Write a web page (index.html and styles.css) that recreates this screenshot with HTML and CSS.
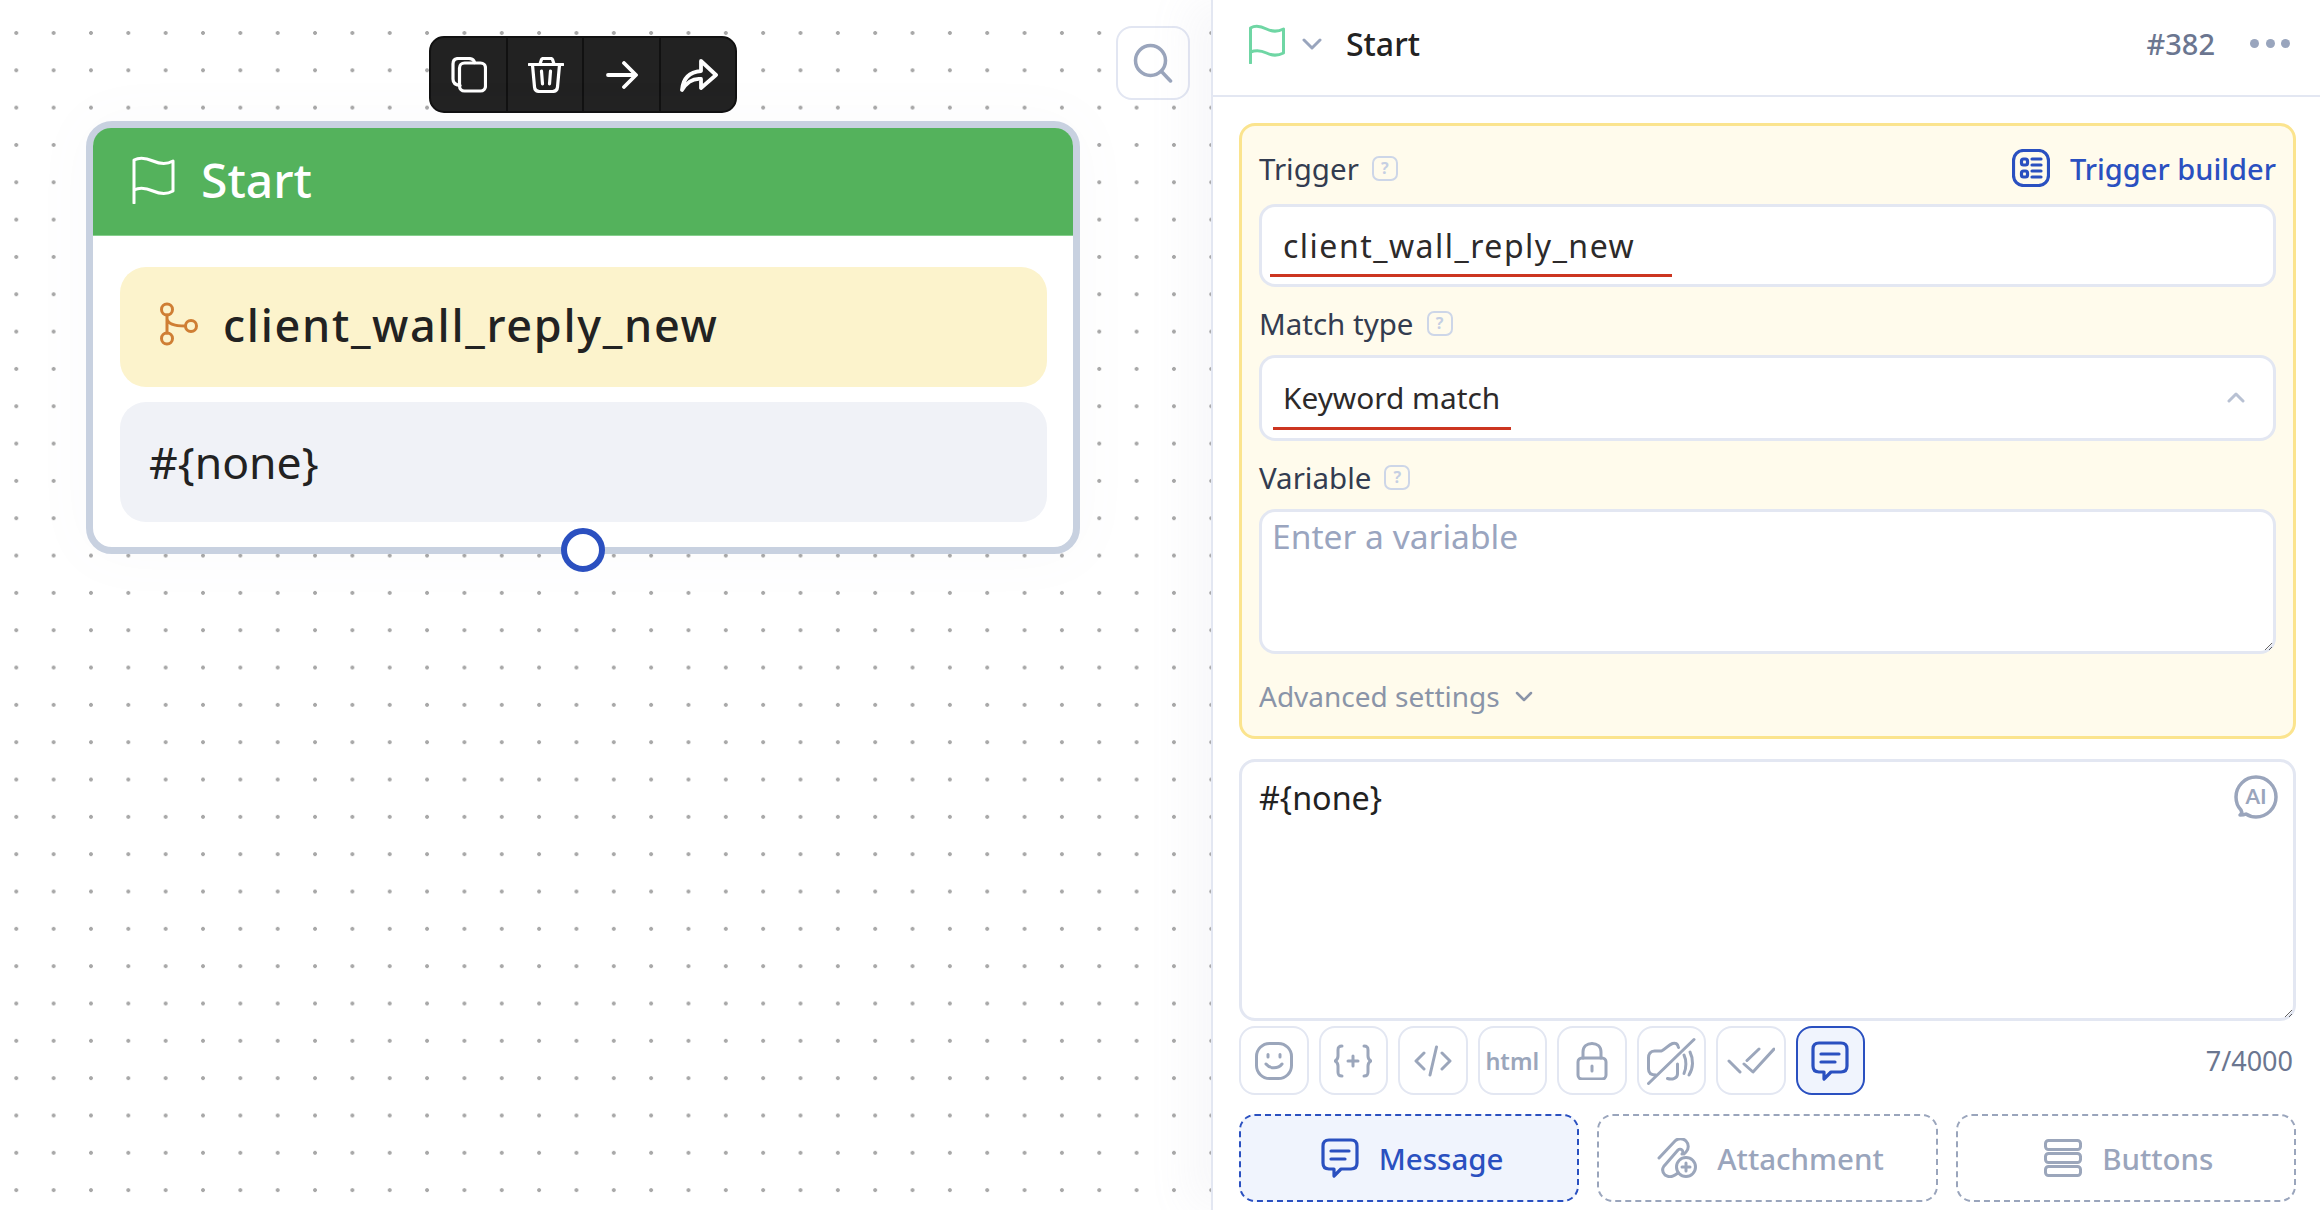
FILE: index.html
```html
<!DOCTYPE html>
<html lang="en">
<head>
<meta charset="utf-8">
<title>Start</title>
<link rel="stylesheet" href="styles.css">
</head>
<body>
<div class="app">
  <main class="canvas">
    <div class="node-tools">
      <button class="node-tool"><svg width="36" height="36" viewBox="0 0 36 36" class="ic-w"><path d="M9 28.500C4.500 28 2 26 2 22V7c0-3.500 2-5.500 5.500-5.500h10c3.500 0 5.500 2 6 4"/><rect x="8.500" y="6" width="26" height="28" rx="5"/></svg></button>
      <button class="node-tool"><svg width="36" height="36" viewBox="0 0 36 36" class="ic-w"><path d="M1 7.500h34M12 7l1.500-4.500c.3-.8 1-1 1.800-1h7.400c.8 0 1.500.2 1.800 1L26 7M4.500 8l2 22c.3 3 2 4.500 5 4.500h13c3 0 4.700-1.500 5-4.500l2-22M13.500 14l1 13M22.500 14l-1 13"/></svg></button>
      <button class="node-tool"><svg width="32" height="28" viewBox="0 0 32 28" class="ic-w ic-thick"><path d="M2 14h27M18 2l12 12-12 12"/></svg></button>
      <button class="node-tool"><svg width="38" height="34" viewBox="0 0 38 34" class="ic-w ic-thick"><path d="M2 32C3 20 10 14 21 13V3l15 14-15 13V21C13 20 7 24 2 32z"/></svg></button>
    </div>
    <button class="search"><svg width="40" height="40" viewBox="0 0 40 40" class="ic-search"><circle cx="17.500" cy="17.500" r="15"/><path d="M28.500 28.500l9 9.500"/></svg></button>
    <section class="node">
      <header class="node-head">
        <svg width="44" height="48" viewBox="0 0 44 48" class="ic-flag-w"><path d="M3 47V4c6-3 12-2 19 1s13 4 20 0v30c-7 4-13 3-20 0s-13-4-19-1"/></svg>
        <span class="node-title">Start</span>
      </header>
      <div class="node-body">
        <div class="node-row node-row-trigger">
          <svg width="40" height="44" viewBox="0 0 40 44" class="ic-trigger"><circle cx="9" cy="7.500" r="5.500"/><circle cx="9" cy="36.500" r="5.500"/><circle cx="33" cy="24" r="5.500"/><path d="M9 13v18M9 17c1 5 8 7 18 7"/></svg>
          <span class="node-trigger-text">client_wall_reply_new</span>
        </div>
        <div class="node-row node-row-msg">#{none}</div>
      </div>
      <span class="connector"></span>
    </section>
  </main>
  <aside class="panel">
    <header class="panel-head">
      <svg width="38" height="40" viewBox="0 0 38 40" class="ic-flag-g"><path d="M2.500 39V4c5-3 10-2 16 1s11 3 17 0v24c-6 3-11 3-17 0s-11-3-16-1"/></svg>
      <svg width="20" height="12" viewBox="0 0 20 12" class="ic-chev"><path d="M2 2l8 8 8-8"/></svg>
      <h1 class="panel-title">Start</h1>
      <span class="panel-id">#382</span>
      <span class="panel-more"><i></i><i></i><i></i></span>
    </header>
    <div class="panel-body">
      <section class="card">
        <div class="label-row">
          <span class="label">Trigger</span>
          <span class="help">?</span>
          <a class="builder"><svg width="38" height="38" viewBox="0 0 38 38" class="ic-blue"><rect x="1.500" y="1.500" width="35" height="35" rx="10"/><rect x="9.500" y="10" width="6" height="6" rx="2"/><rect x="9.500" y="22" width="6" height="6" rx="2"/><path d="M20 10h9M20 16h9M20 22h9M20 28h9"/></svg><span>Trigger builder</span></a>
        </div>
        <div class="field field-input">client_wall_reply_new<span class="redline redline-trigger"></span></div>
        <div class="label-row label-row-next">
          <span class="label">Match type</span>
          <span class="help">?</span>
        </div>
        <div class="field field-select">Keyword match<span class="redline redline-match"></span>
          <svg width="18" height="11" viewBox="0 0 18 11" class="ic-chev-up"><path d="M2 9l7-7 7 7"/></svg>
        </div>
        <div class="label-row label-row-next">
          <span class="label">Variable</span>
          <span class="help">?</span>
        </div>
        <div class="field-area">Enter a variable</div>
        <div class="advanced"><span>Advanced settings</span><svg width="18" height="11" viewBox="0 0 18 11" class="ic-chev-adv"><path d="M2 2l7 7 7-7"/></svg></div>
      </section>
      <div class="message">
        #{none}
        <svg width="44" height="44" viewBox="0 0 44 44" class="ic-ai"><path d="M6 40c2-1 2-3 1-5C3 31 2 27 2 22 2 11 11 2 22 2s20 9 20 20-9 20-20 20c-4 0-7-1-10-3-2 1-4 1-6 1z"/><text x="22" y="29" class="ai-text">AI</text></svg>
      </div>
      <div class="tools">
        <button class="tool"><svg width="38" height="38" viewBox="0 0 38 38" class="ic-gray"><rect x="1.500" y="1.500" width="35" height="35" rx="13"/><path d="M11 22c4 5 12 5 16 0"/><path d="M13 12.500v2.500M25 12.500v2.500"/></svg></button>
        <button class="tool"><svg width="38" height="34" viewBox="0 0 38 34" class="ic-gray"><path d="M8 2C5 2 4 3 4 6v6c0 3-1 4-3 5 2 1 3 2 3 5v6c0 3 1 4 4 4M30 2c3 0 4 1 4 4v6c0 3 1 4 3 5-2 1-3 2-3 5v6c0 3-1 4-4 4M19 12v10M14 17h10"/></svg></button>
        <button class="tool"><svg width="38" height="32" viewBox="0 0 38 32" class="ic-gray"><path d="M10 8L2 16l8 8M28 8l8 8-8 8M22.500 2L16 30"/></svg></button>
        <button class="tool tool-html">html</button>
        <button class="tool"><svg width="32" height="38" viewBox="0 0 32 38" class="ic-gray"><rect x="2" y="16" width="28" height="21" rx="4"/><path d="M7 16V10c0-5.500 4-8.500 9-8.500s9 3 9 8.500v6M16 24v5"/></svg></button>
        <button class="tool"><svg width="50" height="48" viewBox="0 0 50 48" class="ic-gray"><path d="M2.500 46.500L48 2.500M10 38C5 38 2.500 36 2.500 32V21c0-4 2-7 6-7h7c4-2 7-6 11-7.500 3-1 5 0 6 4M31.500 27v10c0 4-5 6-10 4.500"/><path d="M38 18c2.500 5 2.500 13 0 18.500M44 15c3.500 7 3.500 16-1 23"/></svg></button>
        <button class="tool"><svg width="48" height="28" viewBox="0 0 48 28" class="ic-gray"><path d="M2 14l11 11M17 17l9 8L47 2M20 13.500L32 2"/></svg></button>
        <button class="tool tool-active"><svg width="38" height="40" viewBox="0 0 38 40" class="ic-blue"><use href="#chat"/></svg></button>
        <span class="counter">7/4000</span>
      </div>
      <div class="kinds">
        <button class="kind kind-active"><svg width="38" height="40" viewBox="0 0 38 40" class="ic-blue"><use href="#chat"/></svg><span>Message</span></button>
        <button class="kind"><svg width="40" height="40" viewBox="0 0 40 40" class="ic-gray"><path d="M2 20L18 3c3-3 8-3 11 0s3 8 0 11l-2 2M8 27L21 12c1-1 3-1 4 0s1 3 0 4"/><path d="M21 35l-3 2c-3 2-7 2-10 0-3-3-3-6-1-9"/><circle cx="29" cy="29" r="9.500"/><path d="M29 25v8M25 29h8"/></svg><span>Attachment</span></button>
        <button class="kind"><svg width="38" height="38" viewBox="0 0 38 38" class="ic-gray"><rect x="1.500" y="1.500" width="35" height="9" rx="3"/><rect x="1.500" y="14.500" width="35" height="9" rx="3"/><rect x="1.500" y="27.500" width="35" height="9" rx="3"/></svg><span>Buttons</span></button>
      </div>
    </div>
  </aside>
</div>
<svg class="defs" width="0" height="0"><defs><g id="chat"><path d="M8 2h22c4 0 6 2 6 6v17c0 4-2 6-6 6H20l-7 7v-7H8c-4 0-6-2-6-6V8c0-4 2-6 6-6z"/><path d="M10 13h18M10 21h14"/></g></defs></svg>
</body>
</html>
```
FILE: styles.css
```css
* { box-sizing: border-box; }
html, body { margin: 0; height: 100%; }
body { font-family: "Noto Sans", "Liberation Sans", sans-serif; color: #222; background: #fff; }
button { font: inherit; padding: 0; cursor: pointer; }
svg { display: block; flex: none; fill: none; stroke-linecap: round; stroke-linejoin: round; }
.defs { position: absolute; }

.app { display: flex; width: 2320px; height: 1210px; overflow: hidden; }

.canvas {
  position: relative;
  flex: 0 0 1211px;
  background-image: radial-gradient(circle, #a8a8a8 1.7px, transparent 2.2px);
  background-size: 37.35px 37.33px;
  background-position: -2.4px 14.300px;
}

.node-tools {
  position: absolute; left: 429px; top: 36px;
  display: flex; width: 308px; height: 77px;
  background: #222; border: 2px solid #111; border-radius: 15px; overflow: hidden;
}
.node-tool {
  flex: 1; display: flex; align-items: center; justify-content: center;
  background: none; border: 0; border-left: 2px solid #111;
  padding-left: 2px;
}
.node-tool:first-child { border-left: 0; }
.ic-w { stroke: #fff; stroke-width: 3.200; }
.ic-thick { stroke-width: 3.800; }

.search {
  position: absolute; left: 1116px; top: 26px;
  width: 74px; height: 74px;
  display: flex; align-items: center; justify-content: center;
  background: #fff; border: 2px solid #e2e6f2; border-radius: 16px;
}
.ic-search { stroke: #9aa5bc; stroke-width: 3.500; }

.node {
  position: absolute; left: 86px; top: 121px; width: 994px; height: 433px;
  background: #fff; border: 7px solid #c8d1e0; border-radius: 26px;
  box-shadow: 0 0 60px rgba(120, 130, 160, .04);
}
.node-head {
  display: flex; align-items: center; gap: 26px;
  height: 108px; padding: 0 0 4px 38px;
  background: #54b25c; border-radius: 18px 18px 0 0;
  border-bottom: 1px solid #86cf8d;
}
.ic-flag-w { stroke: #fff; stroke-width: 3; }
.node-title { font-size: 48px; font-weight: 500; color: #fff; }
.node-body { display: flex; flex-direction: column; gap: 15px; padding: 31px 26px 0 27px; }
.node-row {
  display: flex; align-items: center; height: 120px; border-radius: 26px;
  font-size: 44.500px; color: #222;
}
.node-row-trigger { background: #fcf3cc; padding: 0 0 6px 38px; gap: 25px; }
.node-row-msg { background: #f0f2f7; padding: 0 0 2px 29px; }
.node-trigger-text { font-size: 45px; font-weight: 500; letter-spacing: 1.700px; }
.ic-trigger { stroke: #cf7e34; stroke-width: 3; }
.connector {
  position: absolute; left: 468px; top: 400px;
  width: 44px; height: 44px; border-radius: 50%;
  background: #fff; border: 6px solid #2b50c0;
}

.panel {
  flex: 1; min-width: 0; display: flex; flex-direction: column;
  background: #fff; border-left: 2px solid #e3e7f2;
  box-shadow: -24px 0 40px rgba(150, 160, 190, .07);
  position: relative;
}
.panel-head {
  display: flex; align-items: center;
  height: 97px; padding: 0 30px 8px 35px; border-bottom: 2px solid #e3e7f2;
}
.ic-flag-g { stroke: #6fd6a4; stroke-width: 3; }
.ic-chev { stroke: #99a5bd; stroke-width: 3; margin-left: 16px; }
.panel-title { margin: 0 0 0 24px; font-size: 32px; font-weight: 500; color: #222; }
.panel-id { margin-left: auto; font-size: 29px; font-weight: 500; color: #6b7690; }
.panel-more { display: flex; gap: 6.500px; margin-left: 35px; }
.panel-more i { width: 9px; height: 9px; border-radius: 50%; background: #99a5bd; }

.panel-body { display: flex; flex-direction: column; padding: 26px 24px 0 26px; }

.card {
  display: flex; flex-direction: column;
  height: 616px; padding: 22px 17px 0;
  background: #fffbec; border: 3px solid #fbe48e; border-radius: 16px;
}
.label-row { display: flex; align-items: center; height: 40px; }
.label-row-next { margin-top: 16px; }
.label { font-size: 29.500px; color: #333c50; }
.help {
  display: flex; align-items: center; justify-content: center;
  width: 26px; height: 25px; margin-left: 13px;
  border: 2.500px solid #cdd6e8; border-radius: 7px;
  font-size: 16px; font-weight: 700; color: #c5cfe3;
}
.builder { display: flex; align-items: center; gap: 20px; margin-left: auto; color: #2a50c0; font-size: 29px; font-weight: 500; }
.ic-blue { stroke: #2a50c0; stroke-width: 3.200; }

.field {
  position: relative; display: flex; align-items: center;
  margin-top: 12px; padding-left: 21px;
  background: #fff; border: 3px solid #e3e7f2; border-radius: 16px;
  color: #2d2a2a; font-size: 32px;
}
.field-input { height: 83px; margin-top: 16px; letter-spacing: 1.500px; }
.field-select { height: 86px; font-size: 29.800px; justify-content: space-between; padding: 0 28px 2px 21px; }
.redline { position: absolute; height: 3.500px; background: #cc3520; }
.redline-trigger { left: 8px; width: 402px; bottom: 7px; }
.redline-match { left: 11px; width: 238px; bottom: 8px; }
.ic-chev-up { stroke: #b8c1d3; stroke-width: 3; }

.field-area {
  height: 145px; margin-top: 12px; padding: 1px 10px;
  background: #fff; border: 3px solid #e3e7f2; border-radius: 16px;
  color: #9aa5bf; font-size: 33.600px;
  overflow: auto; resize: vertical;
}
.advanced {
  display: flex; align-items: center; gap: 15px; height: 40px; margin-top: 22px;
  color: #8a94a8; font-size: 28px;
}
.ic-chev-adv { stroke: #8a94a8; stroke-width: 2.500; }

.message {
  position: relative;
  height: 262px; margin-top: 20px; padding: 13px 17px;
  background: #fff; border: 3px solid #e3e7f2; border-radius: 16px;
  font-size: 32.300px; color: #222;
  overflow: auto; resize: vertical;
}
.ic-ai { position: absolute; right: 15px; top: 13px; stroke: #9aa5bc; stroke-width: 3.500; }
.ai-text { fill: #9aa5bc; stroke: none; font-family: Lato, sans-serif; font-size: 21px; font-weight: 700; text-anchor: middle; }

.tools { display: flex; align-items: center; gap: 10px; margin-top: 5px; }
.tool {
  display: flex; align-items: center; justify-content: center;
  width: 69.500px; height: 69px;
  background: #fff; border: 2.500px solid #e3e7f2; border-radius: 16px;
}
.tool-html { font-size: 23.500px; font-weight: 600; color: #9ba6bb; }
.tool-active { background: #f0f4fd; border-color: #2a50c0; }
.ic-gray { stroke: #9ba6bb; stroke-width: 3; }
.counter { margin-left: auto; padding-right: 3px; font-size: 27px; color: #6b7690; }

.kinds { display: flex; gap: 18px; margin-top: 19px; }
.kind {
  flex: 1; display: flex; align-items: center; justify-content: center; gap: 20px;
  height: 88px; padding-left: 6px;
  background: #fff; border: 2.500px dashed #9aa5bc; border-radius: 16px;
  color: #9aa5bc; font-size: 29.500px; font-weight: 500;
}
.kind-active { background: #f0f4fd; border-color: #2a50c0; color: #2a50c0; }
```
